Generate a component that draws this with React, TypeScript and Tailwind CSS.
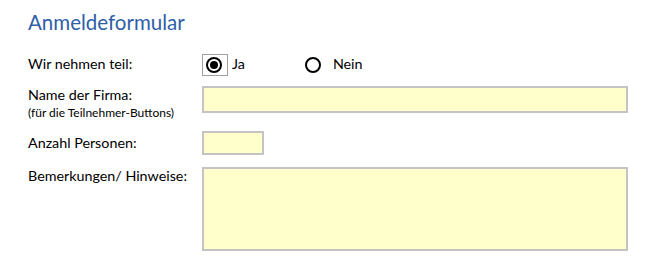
import { useState } from "react";

function Radio({ checked }: { checked: boolean }) {
  return (
    <span className="flex h-4 w-4 items-center justify-center rounded-full border-2 border-black">
      {checked && <span className="h-2 w-2 rounded-full bg-black" />}
    </span>
  );
}

export default function App() {
  const [teil, setTeil] = useState("ja");

  return (
    <div className="h-[269px] w-[664px] bg-white pl-[28px] pt-[8px] font-['Lato',sans-serif] text-[14.3px] text-black">
      <h1 className="text-[20.5px] leading-[28px] text-[#2f5ea8]">Anmeldeformular</h1>

      <div className="mt-[17px] flex flex-col">
        <div className="flex h-[24px] items-center">
          <div className="w-[174px] pb-[3px]">Wir nehmen teil:</div>
          <button
            className={`flex h-[22px] w-[26px] items-center pl-[3px] ${
              teil === "ja" ? "border border-[#a0a0a0]" : "border border-transparent"
            }`}
            onClick={() => setTeil("ja")}
          >
            <Radio checked={teil === "ja"} />
          </button>
          <span className="ml-[4px] pb-[3px]">Ja</span>
          <button className="ml-[60px] flex items-center" onClick={() => setTeil("nein")}>
            <Radio checked={teil === "nein"} />
          </button>
          <span className="ml-[12px] pb-[3px]">Nein</span>
        </div>

        <div className="mt-[9px] flex items-start">
          <div className="w-[174px]">
            <div className="leading-[18px]">Name der Firma:</div>
            <div className="text-[12px] leading-[18px]">(für die Teilnehmer-Buttons)</div>
          </div>
          <input className="h-[27px] w-[426px] border-2 border-[#c4c4c4] bg-[#ffffcc] outline-none" />
        </div>

        <div className="mt-[9px] flex items-center">
          <div className="w-[174px]">Anzahl Personen:</div>
          <input className="h-[24px] w-[62px] border-2 border-[#c4c4c4] bg-[#ffffcc] outline-none" />
        </div>

        <div className="mt-[12px] flex items-start">
          <div className="w-[174px] leading-[18px]">Bemerkungen/ Hinweise:</div>
          <textarea className="h-[84px] w-[426px] resize-none border-2 border-[#c4c4c4] bg-[#ffffcc] outline-none" />
        </div>
      </div>
    </div>
  );
}
